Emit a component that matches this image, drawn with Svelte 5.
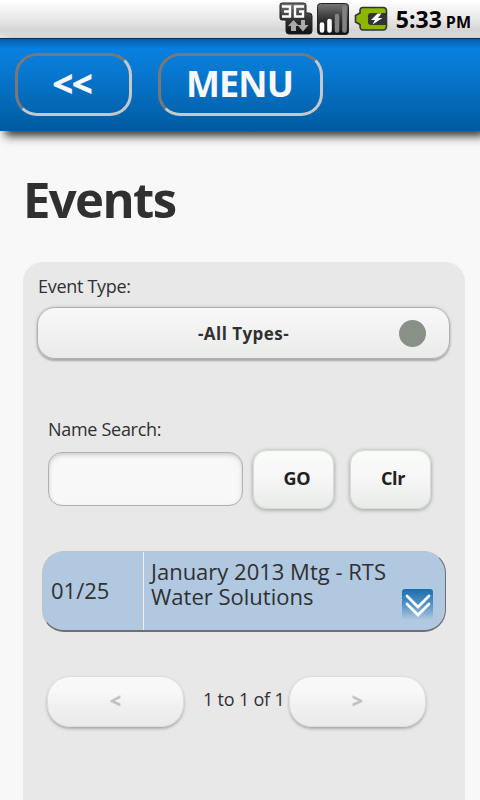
<script>
  let eventType = '-All Types-';
  let search = '';

  const events = [{ date: '01/25', title: 'January 2013 Mtg - RTS Water Solutions' }];

  function clearSearch() {
    search = '';
  }
</script>

<div class="screen">
  <div class="status">
    <svg class="network" width="34" height="34" viewBox="0 0 34 34">
      <defs>
        <linearGradient id="dark" x1="0" y1="0" x2="0" y2="1">
          <stop offset="0" stop-color="#777" />
          <stop offset="0.5" stop-color="#333" />
          <stop offset="1" stop-color="#111" />
        </linearGradient>
      </defs>
      <path d="M3 1H24Q27 1 27 3V11H30Q33 11 33 14V29Q33 32 30 32H10Q7 32 7 29V18H3Q1 18 1 16V3Q1 1 3 1Z" fill="url(#dark)" stroke="#222" />
      <path d="M3 4.500H11V14.500H3M5 9.500H11M25 4.500H16V14.500H24V9.500H20" fill="none" stroke="#fff" stroke-width="2.400" />
      <path d="M14.500 18L20 24H17V29H12V24H9ZM22 18H26V23H29.500L24 29.500L18.500 23H22Z" fill="#aaa" />
    </svg>
    <svg class="signal" width="34" height="34" viewBox="0 0 34 34">
      <rect x="1.500" y="1.500" width="31" height="31" rx="3" fill="url(#dark)" stroke="#222" />
      <g stroke-width="4.600" stroke-linecap="round">
        <path d="M6 22.500V28.500M13.500 19V28.500" stroke="#fff" />
        <path d="M21 14V28.500M28.500 6V28.500" stroke="#828282" />
      </g>
    </svg>
    <svg class="battery" width="34" height="26" viewBox="0 0 34 26">
      <path d="M9 1.500H29Q32.500 1.500 32.500 5V20Q32.500 24 29 24H9Q6 24 6 20V18.500L1.500 16V9.500L6 7V5Q6 1.500 9 1.500Z" fill="#8db600" stroke="#333" stroke-width="1.600" />
      <path d="M17 7H32V19H17Q14 19 14 16V10Q14 7 17 7Z" fill="#333" />
      <path d="M23.500 7.500L17 14H21L18.500 18.500L28.500 12H24L27.500 7.500Z" fill="#fff" />
    </svg>
    <span class="time">5:33</span><span class="ampm">PM</span>
  </div>

  <header>
    <button class="nav back">&lt;&lt;</button>
    <button class="nav menu">MENU</button>
  </header>

  <main>
    <h1>Events</h1>

    <section class="panel">
      <div class="label type-label">Event Type:</div>
      <button class="select">
        <span>{eventType}</span>
        <i class="dot"></i>
      </button>

      <label class="label search-label" for="search">Name Search:</label>
      <div class="search-row">
        <input id="search" type="text" bind:value={search} />
        <button class="small">GO</button>
        <button class="small clear" on:click={clearSearch}>Clr</button>
      </div>

      {#each events as event}
        <div class="event">
          <div class="date">{event.date}</div>
          <div class="title">{event.title}</div>
          <svg class="more" width="31" height="31" viewBox="0 0 31 31">
            <defs>
              <linearGradient id="blue" x1="0" y1="0" x2="0" y2="1">
                <stop offset="0" stop-color="#1c6dac" />
                <stop offset="0.5" stop-color="#5293c3" />
                <stop offset="1" stop-color="#b0c8e0" />
              </linearGradient>
            </defs>
            <rect width="31" height="31" rx="3" fill="url(#blue)" />
            <path d="M5 7L16 18L27 7M5 15L16 26L27 15" fill="none" stroke="#fff" stroke-width="2.800" stroke-linecap="round" />
          </svg>
        </div>
      {/each}

      <div class="pager">
        <button class="page" disabled>&lt;</button>
        <span class="count">1 to 1 of 1</span>
        <button class="page" disabled>&gt;</button>
      </div>
    </section>
  </main>
</div>

<style>
  .screen {
    width: 480px;
    height: 800px;
    overflow: hidden;
    display: flex;
    flex-direction: column;
    background: #f8f8f8;
    color: #303030;
    font-family: 'Open Sans', 'Noto Sans', sans-serif;
  }

  button {
    padding: 0;
    font-family: inherit;
    font-weight: bold;
    color: #202020;
    box-sizing: border-box;
  }

  .status {
    height: 38px;
    flex: none;
    display: flex;
    align-items: center;
    justify-content: flex-end;
    box-sizing: border-box;
    padding-right: 9px;
    background: linear-gradient(#fff, #e8e8e8 50%, #d4d4d4 80%, #e8e8e8);
    color: #000;
    font-weight: bold;
  }

  .network {
    margin-right: 3px;
  }

  .signal {
    margin-right: 4px;
  }

  .battery {
    margin-right: 8px;
  }

  .time {
    font-size: 23px;
  }

  .ampm {
    font-size: 16px;
    margin: 5px 0 0 4px;
  }

  header {
    position: relative;
    height: 93px;
    flex: none;
    display: flex;
    gap: 26px;
    padding: 14px 15px;
    box-sizing: border-box;
    border-top: 1px solid #003058;
    background: linear-gradient(#0060b0, #0880e0 10px, #0878d0 35%, #0060a8 90%, #0058a0);
    box-shadow: 5px 5px 9px #333;
  }

  .nav {
    height: 63px;
    border: 3px solid;
    border-color: #787878 #c8c8c8 #c8c8c8 #787878;
    border-radius: 22px;
    background: none;
    color: #f8f8f8;
    font-size: 36px;
    line-height: 50px;
    padding-bottom: 1px;
  }

  .back {
    width: 117px;
    padding-right: 3px;
    letter-spacing: -1px;
    -webkit-text-stroke: 0.6px #f8f8f8;
  }

  .menu {
    width: 165px;
    padding-right: 2px;
    letter-spacing: -0.9px;
  }

  main {
    flex: 1;
    min-height: 0;
    display: flex;
    flex-direction: column;
    padding: 34px 15px 0 23px;
  }

  h1 {
    margin: 0 0 29px;
    font-size: 49px;
    line-height: 68px;
    letter-spacing: -1.6px;
  }

  .panel {
    flex: 1;
    padding: 13px 15px 0 14px;
    border-radius: 20px 20px 0 0;
    background: #e8e8e8;
  }

  .label {
    display: block;
    font-size: 18px;
    line-height: 22px;
    letter-spacing: -0.3px;
  }

  .select {
    display: flex;
    align-items: center;
    width: 413px;
    height: 52px;
    margin-top: 10px;
    padding: 0 23px 0 0;
    border: 1px solid #b0b0b0;
    border-radius: 18px;
    background: linear-gradient(#f8f8f8, #f0f0f0 60%, #e8ece8);
    box-shadow: 0 2px 2px #aaa, 0 0 3px #bbb;
    font-size: 17px;
    color: #303030;
  }

  .select span {
    flex: 1;
    padding-left: 50px;
    letter-spacing: 0.45px;
  }

  .dot {
    width: 27px;
    height: 27px;
    border-radius: 50%;
    background: #889088;
  }

  .type-label {
    padding-left: 1px;
  }

  .search-label {
    margin: 59px 0 0 11px;
  }

  .search-row {
    display: flex;
    align-items: center;
    margin: 10px 0 0 11px;
  }

  input {
    width: 195px;
    height: 54px;
    box-sizing: border-box;
    margin: 0 0 2px;
    padding: 0 12px;
    border: 1px solid #b0b0b0;
    border-radius: 14px;
    background: #f8f8f8;
    box-shadow: inset 0 2px 4px #ccc;
    font: 18px 'Open Sans', sans-serif;
  }

  .small {
    width: 81px;
    height: 59px;
    margin-left: 10px;
    padding: 0 0 3px 7px;
    border: 1px solid #d8dcd8;
    border-radius: 14px;
    background: linear-gradient(#f8fcf8, #f8f8f8 40%, #e8ece8);
    box-shadow: 0 1px 4px #999;
    font-size: 18px;
    letter-spacing: -0.3px;
  }

  .clear {
    margin-left: 16px;
    padding-left: 5px;
  }

  .event {
    display: flex;
    box-sizing: border-box;
    width: 404px;
    height: 81px;
    margin: 42px 0 0 5px;
    border: 1px solid;
    border-color: #c0c4c4 #707070 #707070 #c0c4c4;
    border-bottom-width: 2px;
    border-radius: 22px;
    background: #b0c8e0;
    font-size: 22px;
    position: relative;
  }

  .date {
    width: 92px;
    padding-left: 8px;
    line-height: 76px;
    border-right: 1px solid #f0f0f0;
  }

  .title {
    width: 250px;
    padding: 7px 0 0 7px;
    line-height: 25px;
  }

  .more {
    position: absolute;
    right: 12px;
    bottom: 10px;
  }

  .pager {
    display: flex;
    align-items: center;
    margin: 44px 0 0 10px;
  }

  .page {
    width: 137px;
    height: 51px;
    padding-bottom: 2px;
    border: 1px solid #ddd;
    border-radius: 23px;
    background: linear-gradient(#f8f8f8 30%, #f0f0f0 60%, #e8ece8);
    box-shadow: 0 2px 3px #aaa;
    color: #c0c0c0;
    font-size: 19px;
    -webkit-text-stroke: 0.4px #c0c0c0;
  }

  .count {
    width: 105px;
    box-sizing: border-box;
    padding: 0 0 5px 19px;
    font-size: 18px;
    white-space: nowrap;
    letter-spacing: -0.2px;
  }
</style>
